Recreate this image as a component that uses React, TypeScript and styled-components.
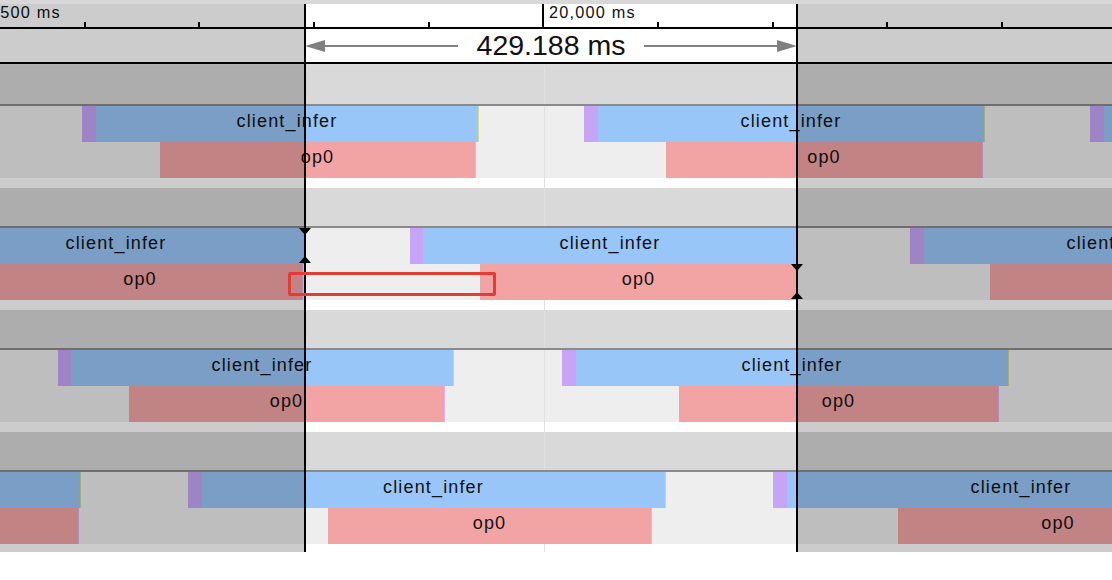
import React from 'react'
import styled, { createGlobalStyle, css } from 'styled-components'

// time window of the selection, in px of the canvas
const SEL_START = 305
const SEL_END = 797

type SliceKind = 'blue' | 'purple' | 'pink'

interface SliceData {
	kind: SliceKind
	x: number
	w: number
	label?: string
	mark?: boolean
}

interface GroupData {
	top: SliceData[]
	bottom: SliceData[]
	last?: boolean
}

const COLORS: Record<SliceKind, string> = {
	blue: '#99c6f8',
	purple: '#c6a5f7',
	pink: '#f2a4a4'
}

const MARKS: Record<SliceKind, string> = {
	blue: '#d3da8c',
	purple: '#d3da8c',
	pink: '#e7aef2'
}

const GROUPS: GroupData[] = [
	{
		top: [
			{ kind: 'purple', x: 82, w: 14 },
			{ kind: 'blue', x: 96, w: 382, label: 'client_infer', mark: true },
			{ kind: 'purple', x: 584, w: 14 },
			{ kind: 'blue', x: 598, w: 386, label: 'client_infer', mark: true },
			{ kind: 'purple', x: 1090, w: 14 },
			{ kind: 'blue', x: 1104, w: 386, label: 'client_infer' }
		],
		bottom: [
			{ kind: 'pink', x: 160, w: 315, label: 'op0', mark: true },
			{ kind: 'pink', x: 666, w: 316, label: 'op0', mark: true }
		]
	},
	{
		top: [
			{ kind: 'blue', x: -72, w: 376, label: 'client_infer' },
			{ kind: 'purple', x: 410, w: 13 },
			{ kind: 'blue', x: 423, w: 374, label: 'client_infer' },
			{ kind: 'purple', x: 910, w: 14 },
			{ kind: 'blue', x: 924, w: 386, label: 'client_infer' }
		],
		bottom: [
			{ kind: 'pink', x: -22, w: 324, label: 'op0', mark: true },
			{ kind: 'pink', x: 480, w: 317, label: 'op0' },
			{ kind: 'pink', x: 990, w: 310, label: 'op0' }
		]
	},
	{
		top: [
			{ kind: 'purple', x: 58, w: 13 },
			{ kind: 'blue', x: 71, w: 382, label: 'client_infer', mark: true },
			{ kind: 'purple', x: 562, w: 14 },
			{ kind: 'blue', x: 576, w: 432, label: 'client_infer', mark: true }
		],
		bottom: [
			{ kind: 'pink', x: 129, w: 315, label: 'op0', mark: true },
			{ kind: 'pink', x: 679, w: 319, label: 'op0', mark: true }
		]
	},
	{
		top: [
			{ kind: 'blue', x: -300, w: 380, label: 'client_infer', mark: true },
			{ kind: 'purple', x: 188, w: 14 },
			{ kind: 'blue', x: 202, w: 463, label: 'client_infer', mark: true },
			{ kind: 'purple', x: 773, w: 14 },
			{ kind: 'blue', x: 787, w: 468, label: 'client_infer' }
		],
		bottom: [
			{ kind: 'pink', x: -250, w: 328, label: 'op0', mark: true },
			{ kind: 'pink', x: 328, w: 323, label: 'op0', mark: true },
			{ kind: 'pink', x: 898, w: 320, label: 'op0' }
		],
		last: true
	}
]

const MINOR_TICKS = [84, 198, 313, 428, 657, 772, 886, 1001]

const GlobalStyle = createGlobalStyle`
	html, body {
		margin: 0;
		padding: 0;
		background: #fff;
	}
	body {
		font-family: 'Liberation Sans', Arial, sans-serif;
		color: #111;
	}
`

const gridLine = css`
	background-image: linear-gradient(
		to right,
		transparent 544px,
		#e0e0e0 544px,
		#e0e0e0 545px,
		transparent 545px
	);
`

const Viewer = styled.div`
	position: relative;
	width: 1112px;
	height: 552px;
	overflow: hidden;
	display: flex;
	flex-direction: column;
`

const TopStrip = styled.div`
	height: 4px;
	background: #d8d8d8;
	flex: none;
`

const Ruler = styled.div`
	position: relative;
	height: 23px;
	flex: none;
	background: #fff;
	border-bottom: 2px solid #000;
`

const Tick = styled.div<{ $x: number; $major?: boolean }>`
	position: absolute;
	bottom: 0;
	left: ${(p) => p.$x}px;
	width: 2px;
	height: ${(p) => (p.$major ? 23 : 5)}px;
	background: #000;
`

const TickLabel = styled.span<{ $x: number }>`
	position: absolute;
	top: 0;
	left: ${(p) => p.$x}px;
	font-size: 16.3px;
	letter-spacing: 1.2px;
	line-height: 17px;
	white-space: nowrap;
`

const MeasureBar = styled.div`
	position: relative;
	height: 33px;
	flex: none;
	background: #fff;
	border-bottom: 2px solid #000;
`

const MeasureSpan = styled.div<{ $x: number; $w: number }>`
	position: absolute;
	top: 0;
	bottom: 0;
	left: ${(p) => p.$x}px;
	width: ${(p) => p.$w}px;
	display: flex;
	align-items: center;
`

const ArrowShaft = styled.div`
	flex: 1;
	height: 2px;
	background: #808080;
`

const MeasureText = styled.span`
	font-size: 28.5px;
	line-height: 1;
	margin: 0 19px;
	white-space: nowrap;
`

const Gap = styled.div`
	height: 2px;
	flex: none;
	background: #dcdcdc;
`

const TrackGroup = styled.div`
	display: flex;
	flex-direction: column;
	flex: none;
`

const TrackHeader = styled.div`
	height: 38px;
	background-color: #d9d9d9;
	${gridLine};
	border-bottom: 2px solid #8a8a8a;
`

const SliceRow = styled.div`
	position: relative;
	height: 36px;
	background-color: #eeeeee;
	${gridLine};
	overflow: hidden;
`

const Spacer = styled.div<{ $h: number }>`
	height: ${(p) => p.$h}px;
	background-color: #fff;
	${gridLine};
`

const Slice = styled.div<{ $kind: SliceKind; $x: number; $w: number; $mark?: boolean }>`
	position: absolute;
	top: 0;
	bottom: 0;
	left: ${(p) => p.$x}px;
	width: ${(p) => p.$w}px;
	background: ${(p) => COLORS[p.$kind]};
	display: flex;
	justify-content: center;
	font-size: 18px;
	letter-spacing: 1.15px;
	line-height: 30px;
	white-space: nowrap;

	${(p) =>
		p.$mark &&
		css`
			&::after {
				content: '';
				position: absolute;
				top: 0;
				bottom: 0;
				right: -1px;
				width: 1px;
				background: ${MARKS[p.$kind]};
			}
		`}
`

const Dim = styled.div<{ $x: number; $w: number }>`
	position: absolute;
	top: 4px;
	bottom: 0;
	left: ${(p) => p.$x}px;
	width: ${(p) => p.$w}px;
	background: rgba(0, 0, 0, 0.2);
	pointer-events: none;
`

const SelectionLine = styled.div<{ $x: number }>`
	position: absolute;
	top: 4px;
	bottom: 0;
	left: ${(p) => p.$x - 1}px;
	width: 2px;
	background: #000;
`

const Flag = styled.div<{ $x: number; $y: number; $up?: boolean }>`
	position: absolute;
	left: ${(p) => p.$x - 6}px;
	top: ${(p) => p.$y}px;
	width: 0;
	height: 0;
	border-left: 6px solid transparent;
	border-right: 6px solid transparent;
	${(p) => (p.$up ? 'border-bottom: 7px solid #000;' : 'border-top: 7px solid #000;')}
`

const Highlight = styled.div`
	position: absolute;
	left: 288px;
	top: 272px;
	width: 208px;
	height: 24px;
	box-sizing: border-box;
	border: 3px solid #e53b35;
	border-radius: 2px;
`

const ArrowHead = ({ dir }: { dir: 'left' | 'right' }) => (
	<svg width="20" height="12" viewBox="0 0 20 12" style={{ flex: 'none' }}>
		{dir === 'left' ? (
			<polygon points="0,6 20,0 20,12" fill="#808080" />
		) : (
			<polygon points="20,6 0,0 0,12" fill="#808080" />
		)}
	</svg>
)

const Row = ({ slices }: { slices: SliceData[] }) => (
	<SliceRow>
		{slices.map((s, i) => (
			<Slice key={i} $kind={s.kind} $x={s.x} $w={s.w} $mark={s.mark}>
				{s.label}
			</Slice>
		))}
	</SliceRow>
)

export default function App() {
	return (
		<>
			<GlobalStyle />
			<Viewer>
				<TopStrip />
				<Ruler>
					{MINOR_TICKS.map((x) => (
						<Tick key={x} $x={x} />
					))}
					<Tick $x={-31} $major />
					<TickLabel $x={-26}>19,500 ms</TickLabel>
					<Tick $x={542} $major />
					<TickLabel $x={549}>20,000 ms</TickLabel>
				</Ruler>
				<MeasureBar>
					<MeasureSpan $x={SEL_START} $w={SEL_END - SEL_START}>
						<ArrowHead dir="left" />
						<ArrowShaft />
						<MeasureText>429.188 ms</MeasureText>
						<ArrowShaft />
						<ArrowHead dir="right" />
					</MeasureSpan>
				</MeasureBar>
				<Gap />
				{GROUPS.map((g, i) => (
					<TrackGroup key={i}>
						<TrackHeader />
						<Row slices={g.top} />
						<Row slices={g.bottom} />
						<Spacer $h={g.last ? 8 : 10} />
					</TrackGroup>
				))}

				<Dim $x={0} $w={SEL_START - 1} />
				<Dim $x={SEL_END + 1} $w={1112 - SEL_END - 1} />
				<SelectionLine $x={SEL_START} />
				<SelectionLine $x={SEL_END} />

				<Flag $x={SEL_START} $y={228} />
				<Flag $x={SEL_START} $y={256} $up />
				<Flag $x={SEL_END} $y={264} />
				<Flag $x={SEL_END} $y={292} $up />
				<Highlight />
			</Viewer>
		</>
	)
}
